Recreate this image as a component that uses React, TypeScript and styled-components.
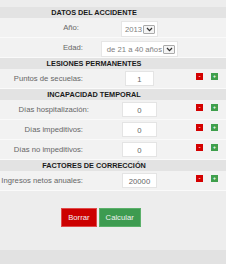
import React from "react";
import styled, { createGlobalStyle } from "styled-components";

const GlobalStyle = createGlobalStyle`
  html, body {
    margin: 0;
    padding: 0;
    background: #ededed;
  }
  body {
    font-family: "Liberation Sans", Arial, sans-serif;
  }
`;

type Field = {
  label: string;
  value: string;
  narrow?: boolean;
  pad?: number;
};

type Section = {
  title: string;
  fields: Field[];
};

const sections: Section[] = [
  {
    title: "LESIONES PERMANENTES",
    fields: [{ label: "Puntos de secuelas:", value: "1", narrow: true }],
  },
  {
    title: "INCAPACIDAD TEMPORAL",
    fields: [
      { label: "Días hospitalización:", value: "0", pad: 10 },
      { label: "Días impeditivos:", value: "0" },
      { label: "Días no impeditivos:", value: "0" },
    ],
  },
  {
    title: "FACTORES DE CORRECCIÓN",
    fields: [{ label: "Ingresos netos anuales:", value: "20000" }],
  },
];

const Chevron = () => (
  <svg width="7" height="5" viewBox="0 0 7 5">
    <path d="M1 1 L3.5 3.6 L6 1" fill="none" stroke="#333" strokeWidth="1.3" />
  </svg>
);

const App: React.FC = () => {
  return (
    <>
      <GlobalStyle />
      <Page>
        <Form>
          <SectionTitle>DATOS DEL ACCIDENTE</SectionTitle>
          <Row>
            <Label pad={20}>Año:</Label>
            <InputCell>
              <Select width={37}>
                <SelectText>2013</SelectText>
                <Arrow>
                  <Chevron />
                </Arrow>
              </Select>
            </InputCell>
            <span />
          </Row>
          <Row>
            <Label>Edad:</Label>
            <InputCell>
              <Select width={77}>
                <SelectText>de 21 a 40 años</SelectText>
                <Arrow>
                  <Chevron />
                </Arrow>
              </Select>
            </InputCell>
            <span />
          </Row>

          {sections.map((section) => (
            <React.Fragment key={section.title}>
              <SectionTitle>{section.title}</SectionTitle>
              {section.fields.map((field) => (
                <Row key={field.label}>
                  <Label pad={field.pad}>{field.label}</Label>
                  <InputCell>
                    <ValueBox narrow={field.narrow}>{field.value}</ValueBox>
                  </InputCell>
                  <Steppers>
                    <StepButton kind="minus">-</StepButton>
                    <StepButton kind="plus">+</StepButton>
                  </Steppers>
                </Row>
              ))}
            </React.Fragment>
          ))}
        </Form>

        <Actions>
          <ActionButton kind="reset">Borrar</ActionButton>
          <ActionButton kind="submit">Calcular</ActionButton>
        </Actions>
      </Page>
      <Footer />
    </>
  );
};

export default App;

const Page = styled.div`
  height: 250px;
  padding-top: 7px;
  box-sizing: border-box;
  background: #ededed;
`;

const Form = styled.div`
  display: flex;
  flex-direction: column;
`;

const SectionTitle = styled.div`
  height: 11px;
  line-height: 12px;
  padding-right: 38px;
  background: #e3e3e3;
  color: #1a1a1a;
  font-size: 7.3px;
  font-weight: 700;
  text-align: center;
`;

const Row = styled.div`
  display: grid;
  grid-template-columns: 99px 81px 1fr;
  align-items: center;
  height: 19px;
  background: #f2f2f2;
  border-bottom: 1px solid #fafafa;
`;

const Label = styled.div<{ pad?: number }>`
  padding-right: ${({ pad }) => pad ?? 16}px;
  text-align: right;
  color: #666;
  font-size: 7.7px;
  white-space: nowrap;
`;

const InputCell = styled.div`
  display: flex;
  justify-content: center;
  align-items: center;
`;

const Select = styled.div<{ width: number }>`
  display: flex;
  align-items: flex-end;
  justify-content: flex-end;
  gap: 1px;
  width: ${({ width }) => width}px;
  height: 16px;
  padding: 0 2px 2px 0;
  box-sizing: border-box;
  background: #fff;
  border: 1px solid #e6e6e6;
  margin-top: 2px;
`;

const SelectText = styled.span`
  color: #808080;
  font-size: 7.7px;
  line-height: 8px;
`;

const Arrow = styled.span`
  display: flex;
  align-items: center;
  justify-content: center;
  width: 10px;
  height: 7px;
  border: 1px solid #aaa;
  background: #f4f4f4;
  border-radius: 1px;
`;

const ValueBox = styled.div<{ narrow?: boolean }>`
  width: ${({ narrow }) => (narrow ? 29 : 35)}px;
  height: 15px;
  line-height: 15px;
  box-sizing: border-box;
  background: #fff;
  border: 1px solid #e4e4e4;
  color: #666;
  font-size: 7.7px;
  text-align: center;
`;

const Steppers = styled.div`
  display: flex;
  gap: 8px;
  padding-left: 16px;
  margin-top: -4px;
`;

const StepButton = styled.div<{ kind: "minus" | "plus" }>`
  display: flex;
  align-items: center;
  justify-content: center;
  width: 7px;
  height: 7px;
  background: ${({ kind }) => (kind === "minus" ? "#d40000" : "#3f9f4c")};
  color: #fff;
  font-size: 5px;
  font-weight: 700;
  line-height: 7px;
`;

const Actions = styled.div`
  display: flex;
  justify-content: center;
  gap: 2px;
  margin-top: 17px;
  padding-right: 24px;
`;

const ActionButton = styled.div<{ kind: "reset" | "submit" }>`
  height: 19px;
  padding: 0 6px;
  box-sizing: border-box;
  background: ${({ kind }) => (kind === "reset" ? "#cc0000" : "#3d9b50")};
  border: 1px solid ${({ kind }) => (kind === "reset" ? "#e04a4a" : "#5bb06a")};
  color: #f2f2f2;
  font-size: 7.7px;
  line-height: 17px;
`;

const Footer = styled.div`
  height: 14px;
  background: #e2e2e2;
`;
